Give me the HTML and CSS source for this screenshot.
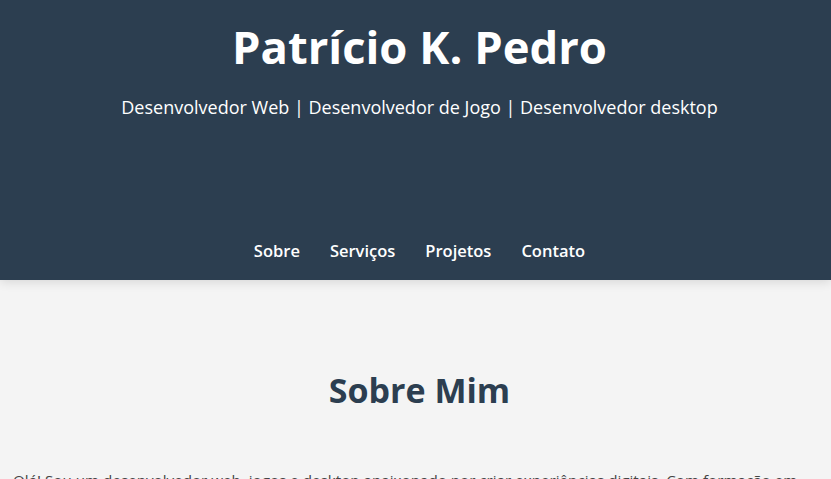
FILE: index.html
```html
<!DOCTYPE html>
<html lang="pt">
<head>
<meta charset="utf-8">
<title>Patrício K. Pedro</title>
<link rel="stylesheet" href="styles.css">
</head>
<body>
<header class="site-header">
  <h1 class="site-title">Patrício K. Pedro</h1>
  <p class="site-tagline">Desenvolvedor Web | Desenvolvedor de Jogo | Desenvolvedor desktop</p>
  <nav class="site-nav">
    <a href="#sobre" class="nav-link">Sobre</a>
    <a href="#servicos" class="nav-link">Serviços</a>
    <a href="#projetos" class="nav-link">Projetos</a>
    <a href="#contato" class="nav-link">Contato</a>
  </nav>
</header>
<main class="content">
  <section class="about" id="sobre">
    <h2 class="section-title">Sobre Mim</h2>
    <p class="about-text">Olá! Sou um desenvolvedor web, jogos e desktop apaixonado por criar experiências digitais. Com formação em desenvolvimento de software, trabalho com diversas tecnologias para entregar soluções eficientes e criativas.</p>
  </section>
</main>
</body>
</html>
```

FILE: styles.css
```css
* { box-sizing: border-box; }

body {
  margin: 0;
  font-family: "Open Sans", "Noto Sans", sans-serif;
  background: #f4f4f4;
  color: #333;
}

.site-header {
  background: #2c3e50;
  color: #fff;
  text-align: center;
  padding: 14px 0 0 8px;
  display: flex;
  flex-direction: column;
  align-items: center;
  box-shadow: 0 2px 10px rgba(0, 0, 0, 0.12);
  position: relative;
}

.site-title {
  margin: 0;
  font-size: 45.4px;
  line-height: 64px;
  font-weight: 700;
}

.site-tagline {
  margin: 16px 0 0;
  font-size: 18px;
  line-height: 26px;
  font-weight: 400;
}

.site-nav {
  display: flex;
  gap: 30px;
  margin-top: 119px;
  height: 41px;
  align-items: flex-start;
}

.nav-link {
  color: #fff;
  text-decoration: none;
  font-weight: 600;
  font-size: 16.5px;
  line-height: 24px;
}

.content {
  padding: 0 13px;
}

.section-title {
  margin: 0;
  padding: 86px 0 0 8px;
  text-align: center;
  color: #2c3e50;
  font-size: 34px;
  line-height: 48px;
  font-weight: 700;
}

.about-text {
  margin: 53px 0 0;
  font-size: 15.2px;
  line-height: 26px;
  font-weight: 400;
  color: #444;
}
```
